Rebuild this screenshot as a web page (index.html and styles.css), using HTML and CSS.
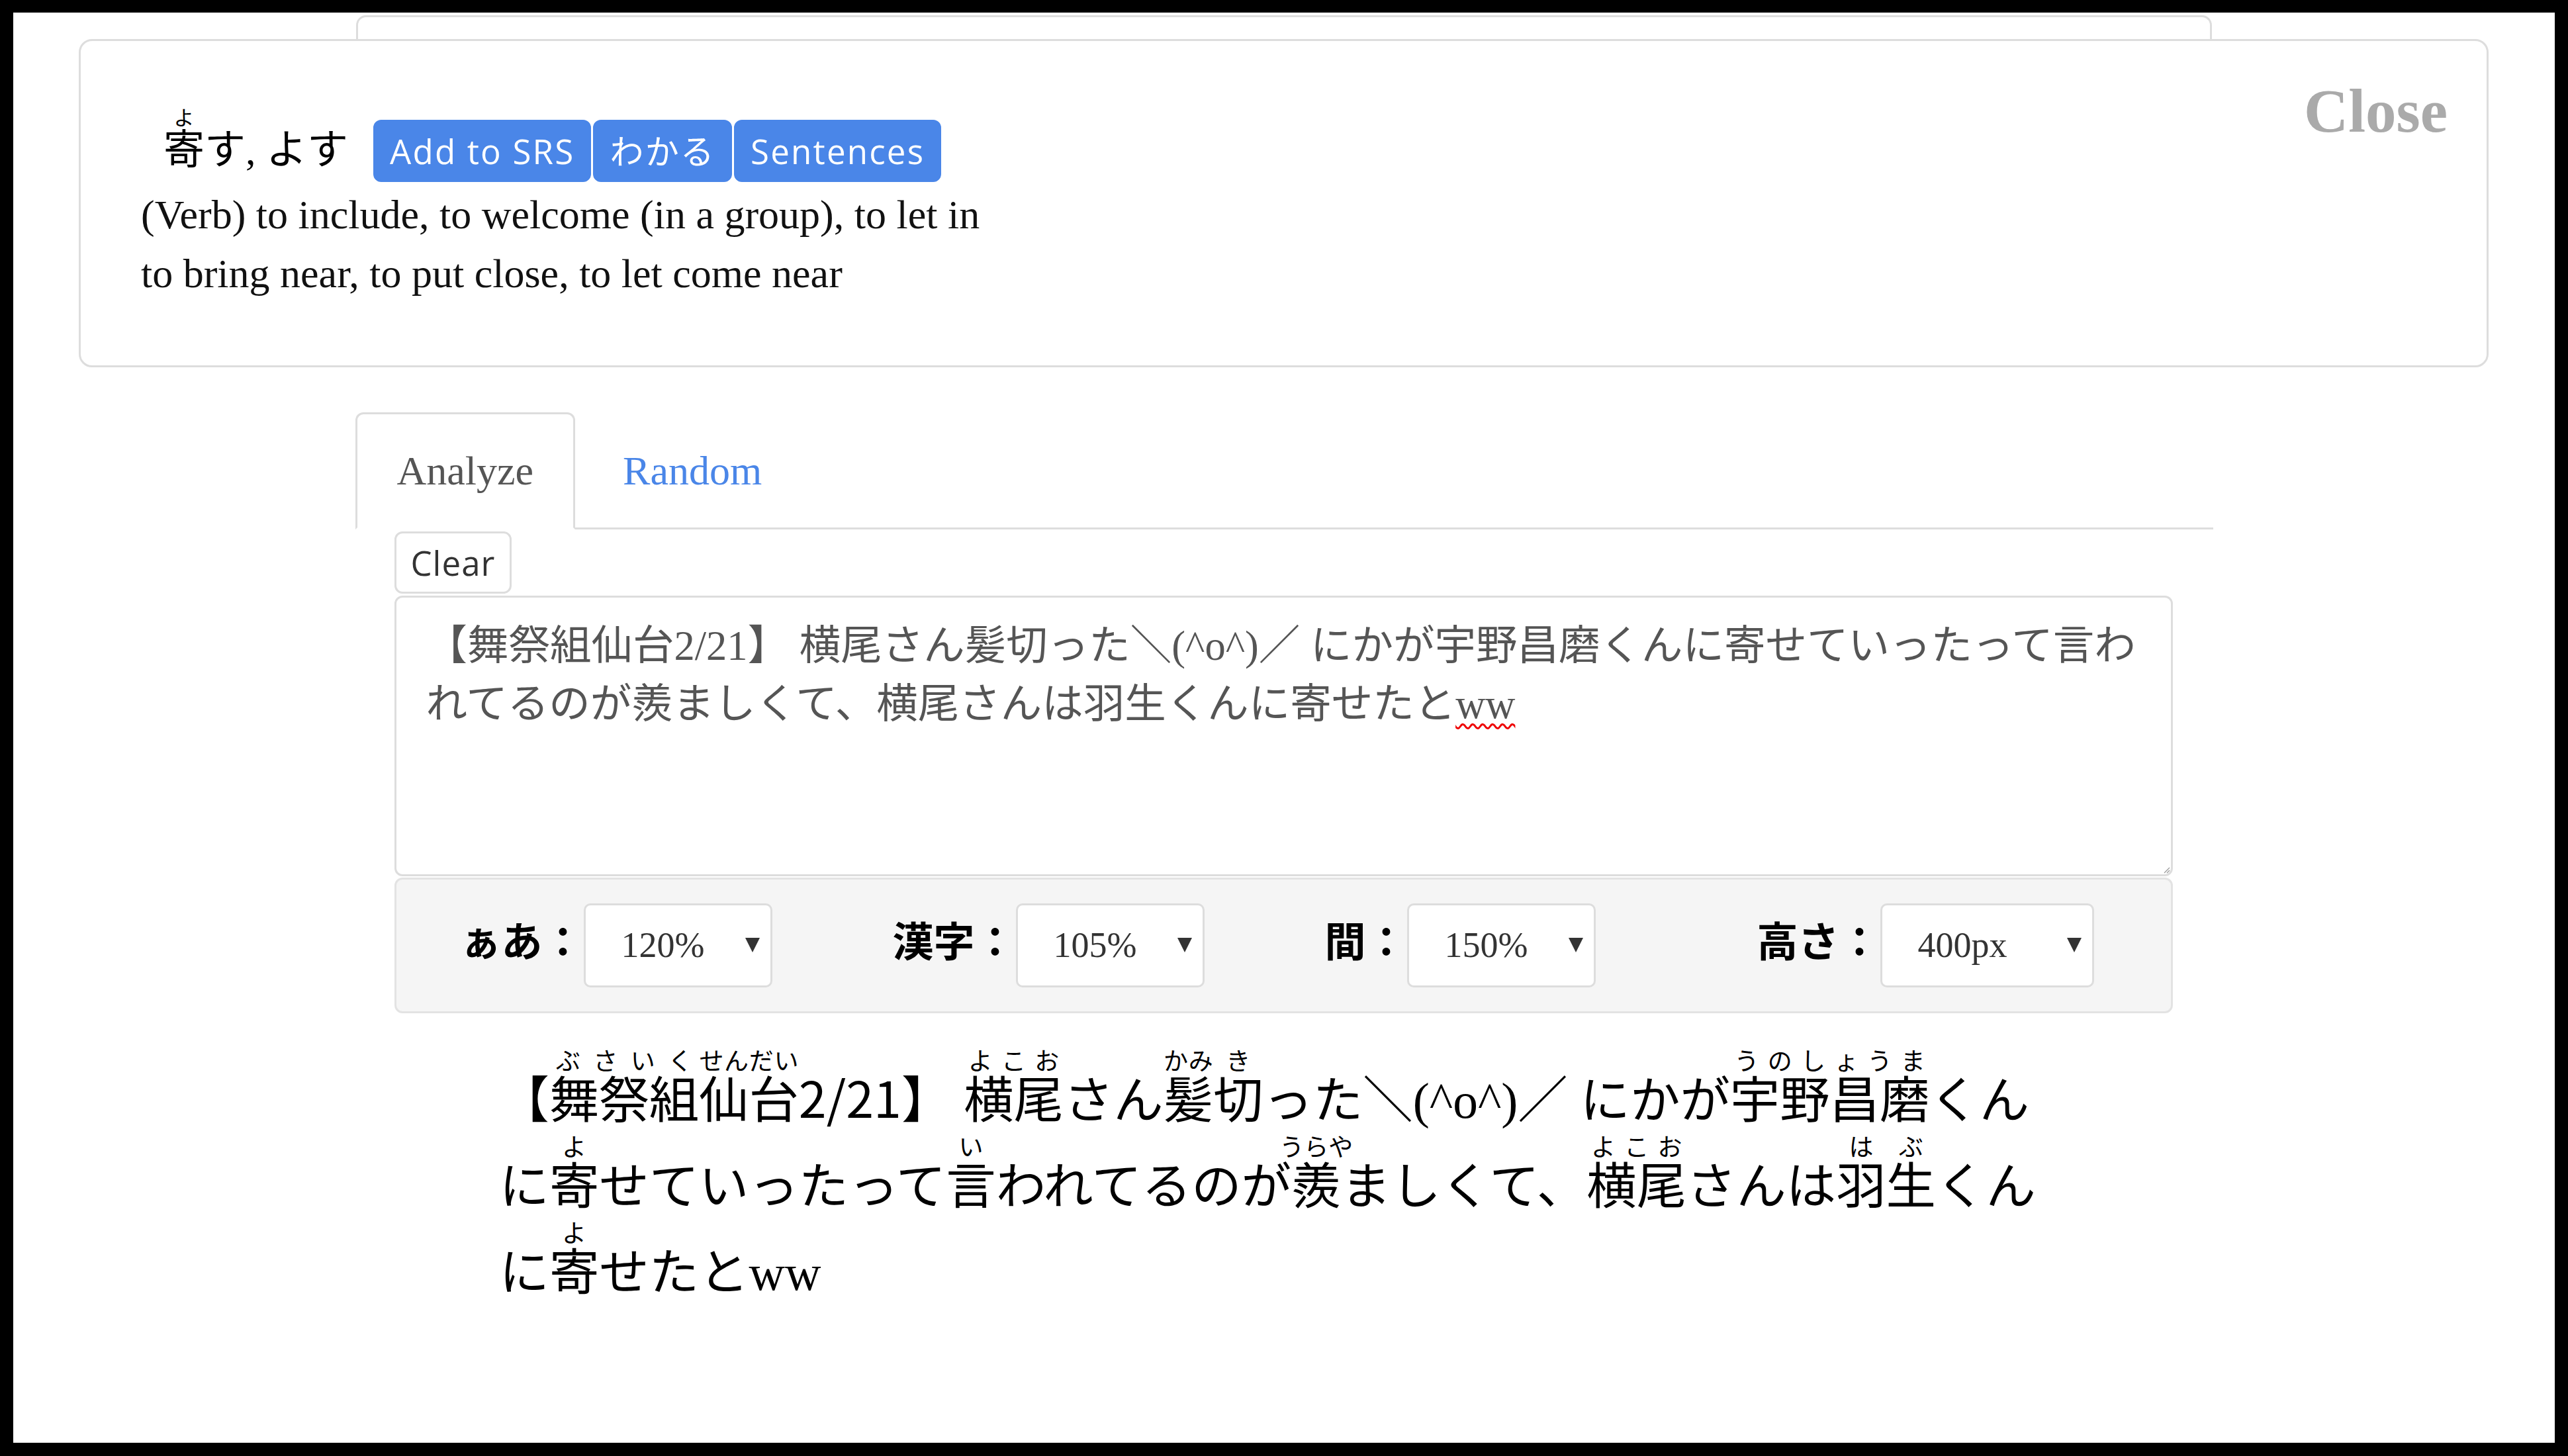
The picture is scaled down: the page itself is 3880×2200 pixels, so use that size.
FILE: index.html
```html
<!DOCTYPE html>
<html lang="ja">
<head>
<meta charset="utf-8">
<title>Reader</title>
<link rel="stylesheet" href="styles.css">
</head>
<body>
<div class="screen">
  <div class="backdialog"></div>

  <div class="container">
    <nav class="tabs">
      <a class="tab active">Analyze</a>
      <a class="tab">Random</a>
    </nav>
    <div class="tab-content">
      <div class="toolbar"><button class="btn btn-default">Clear</button></div>
      <div class="textbox">【舞祭組仙台2/21】 横尾さん髪切った＼(^o^)／ にかが宇野昌磨くんに寄せていったって言われてるのが羨ましくて、横尾さんは羽生くんに寄せたと<span class="misspelled">ww</span><svg class="grip" width="12" height="12" viewBox="0 0 12 12"><path d="M11 3 L3 11 M11 7 L7 11" stroke="#999" stroke-width="1.2" fill="none"/></svg></div>
      <div class="settings">
        <div class="field"><label>ぁあ：</label><div class="select"><span>120%</span><svg class="caret" width="22" height="22" viewBox="0 0 22 22"><path d="M0 0 H22 L11 22 Z" fill="#333"/></svg></div></div>
        <div class="field"><label>漢字：</label><div class="select"><span>105%</span><svg class="caret" width="22" height="22" viewBox="0 0 22 22"><path d="M0 0 H22 L11 22 Z" fill="#333"/></svg></div></div>
        <div class="field"><label>間：</label><div class="select"><span>150%</span><svg class="caret" width="22" height="22" viewBox="0 0 22 22"><path d="M0 0 H22 L11 22 Z" fill="#333"/></svg></div></div>
        <div class="field"><label>高さ：</label><div class="select select-wide"><span>400px</span><svg class="caret" width="22" height="22" viewBox="0 0 22 22"><path d="M0 0 H22 L11 22 Z" fill="#333"/></svg></div></div>
      </div>
      <p class="reading">【<ruby>舞祭組<rt>ぶさいく</rt></ruby><ruby>仙台<rt>せんだい</rt></ruby><span class="cjk">2/21</span>】 <ruby>横尾<rt>よこお</rt></ruby>さん<ruby>髪<rt>かみ</rt></ruby><ruby>切<rt>き</rt></ruby>った＼(^o^)／ にかが<ruby>宇野昌磨<rt>うのしょうま</rt></ruby>くんに<ruby>寄<rt>よ</rt></ruby>せていったって<ruby>言<rt>い</rt></ruby>われてるのが<ruby>羨<rt>うらや</rt></ruby>ましくて、<ruby>横尾<rt>よこお</rt></ruby>さんは<ruby>羽生<rt>はぶ</rt></ruby>くんに<ruby>寄<rt>よ</rt></ruby>せたとww</p>
    </div>
  </div>

  <div class="modal">
    <a class="close">Close</a>
    <div class="word-line">
      <span class="word"><ruby>寄<rt>よ</rt></ruby>す, よす</span>
      <div class="actions">
        <button class="btn btn-primary">Add to SRS</button>
        <button class="btn btn-primary">わかる</button>
        <button class="btn btn-primary">Sentences</button>
      </div>
    </div>
    <div class="defs">
      <div>(Verb) to include, to welcome (in a group), to let in</div>
      <div>to bring near, to put close, to let come near</div>
    </div>
  </div>
</div>
</body>
</html>
```

FILE: styles.css
```css
* { box-sizing: border-box; }

html, body { margin: 0; }

body {
  background: #000;
  font-family: "Liberation Serif", "Noto Sans CJK JP", serif;
  font-size: 62px;
  line-height: 88.6px;
  color: #333;
  text-spacing-trim: space-all;
}

.screen {
  position: relative;
  margin: 19px 20px 0 20px;
  width: 3840px;
  height: 2161px;
  background: #fff;
  overflow: hidden;
}

/* dialog stacked behind the active modal */
.backdialog {
  position: absolute;
  left: 518px;
  top: 4px;
  width: 2804px;
  height: 400px;
  border: 3px solid #ddd;
  border-bottom: none;
  border-radius: 15px 15px 0 0;
  background: #fff;
}

.container {
  width: 2807px;
  margin: 0 auto;
  padding-top: 604px;
}

/* tabs */
.tabs {
  display: flex;
  border-bottom: 3px solid #ddd;
}

.tab {
  padding: 41px 60px;
  margin-right: 9px;
  margin-bottom: -3px;
  border: 3px solid transparent;
  border-radius: 12px 12px 0 0;
  color: #4a86e8;
  line-height: 88.6px;
}

.tab.active {
  border-color: #ddd #ddd transparent;
  background: #fff;
  color: #555;
}

.tab-content {
  padding: 0 61px 0 59px;
}

/* buttons */
.btn {
  display: inline-block;
  margin: 0;
  font-family: "Open Sans", "Noto Sans CJK JP", sans-serif;
  font-size: 51px;
  line-height: 76px;
  letter-spacing: 2.2px;
  padding: 6px 22px;
  border: 3px solid transparent;
  border-radius: 12px;
  cursor: pointer;
}

.btn-default {
  background: #fff;
  border-color: #ddd;
  color: #333;
  letter-spacing: 1px;
}

.btn-primary {
  background: #4a86e8;
  border-color: #4a86e8;
  color: #fff;
}

.toolbar {
  display: flex;
  margin-top: 3px;
}

/* text input */
.textbox {
  position: relative;
  margin-top: 3px;
  height: 424px;
  border: 3px solid #ddd;
  border-radius: 12px;
  padding: 29px 30px 0 45px;
  color: #555;
  font-size: 62.5px;
  line-height: 88.6px;
  background: #fff;
}

.misspelled {
  text-decoration: underline wavy #e00;
  text-decoration-thickness: 3px;
  text-underline-offset: 8px;
}

.grip {
  position: absolute;
  right: 1px;
  bottom: 1px;
}

/* settings bar */
.settings {
  margin-top: 2px;
  height: 205px;
  border: 3px solid #e3e3e3;
  border-radius: 12px;
  background: #f5f5f5;
  padding-left: 97px;
  display: grid;
  grid-template-columns: 653px 653px 653px auto;
  align-items: center;
}

.field {
  display: flex;
  align-items: baseline;
}

.field label {
  font-family: "Noto Sans CJK JP", sans-serif;
  font-weight: bold;
  color: #000;
  font-size: 62px;
  line-height: 1;
}

.select {
  display: flex;
  align-items: center;
  justify-content: space-between;
  width: 285px;
  height: 127px;
  border: 3px solid #ddd;
  border-radius: 10px;
  background: #fff;
  padding: 0 16px 0 54px;
  font-size: 54px;
  line-height: 1;
  color: #333;
}

.select-wide { width: 323px; }

/* ruby reading */
.reading {
  margin: 53px 0 0 0;
  padding: 0 158px 0 159px;
  font-size: 75.4px;
  line-height: 130px;
  color: #000;
}

.reading rt {
  font-size: 37px;
  line-height: 1.2;
}

.cjk { font-family: "Noto Sans CJK JP", sans-serif; }

/* modal */
.modal {
  position: absolute;
  left: 99px;
  top: 40px;
  width: 3641px;
  height: 496px;
  border: 3px solid #ddd;
  border-radius: 20px;
  background: #fff;
  padding: 59px 59px 0 91px;
  color: #111;
}

.close {
  float: right;
  font-weight: bold;
  font-size: 93px;
  line-height: 1;
  color: #aaa;
}

.word-line {
  display: flex;
  align-items: baseline;
  margin-top: 40px;
}

.word {
  margin-left: 34px;
  color: #000;
}

.word rt {
  font-size: 31px;
  line-height: 1.2;
}

.actions {
  display: flex;
  gap: 3px;
  margin-left: 38px;
}

.defs {
  margin-top: 5px;
  line-height: 88.6px;
}
```
